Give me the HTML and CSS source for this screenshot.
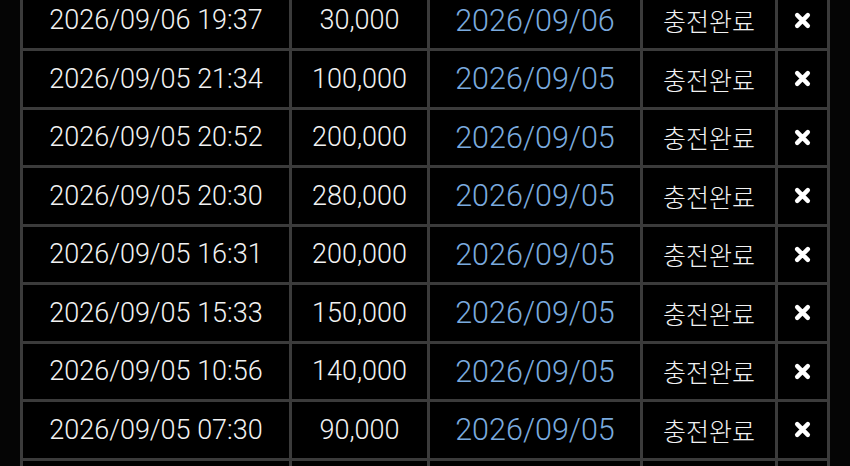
FILE: index.html
```html
<!DOCTYPE html>
<html lang="ko">

<head>
    <meta charset="UTF-8">
    <meta name="viewport" content="width=device-width, initial-scale=1.0">
    <title>충전내역</title>
    <link rel="stylesheet" href="styles.css">
</head>

<body>
    <div class="history">
        <table class="charge-table">
            <tbody>
                <tr>
                    <td class="time">2026/09/06 19:37</td>
                    <td class="amount">30,000</td>
                    <td class="date">2026/09/06</td>
                    <td class="status">충전완료</td>
                    <td class="del"><svg viewBox="0 0 16 16"><path d="M3 3L13 13M13 3L3 13" /></svg></td>
                </tr>
                <tr>
                    <td class="time">2026/09/05 21:34</td>
                    <td class="amount">100,000</td>
                    <td class="date">2026/09/05</td>
                    <td class="status">충전완료</td>
                    <td class="del"><svg viewBox="0 0 16 16"><path d="M3 3L13 13M13 3L3 13" /></svg></td>
                </tr>
                <tr>
                    <td class="time">2026/09/05 20:52</td>
                    <td class="amount">200,000</td>
                    <td class="date">2026/09/05</td>
                    <td class="status">충전완료</td>
                    <td class="del"><svg viewBox="0 0 16 16"><path d="M3 3L13 13M13 3L3 13" /></svg></td>
                </tr>
                <tr>
                    <td class="time">2026/09/05 20:30</td>
                    <td class="amount">280,000</td>
                    <td class="date">2026/09/05</td>
                    <td class="status">충전완료</td>
                    <td class="del"><svg viewBox="0 0 16 16"><path d="M3 3L13 13M13 3L3 13" /></svg></td>
                </tr>
                <tr>
                    <td class="time">2026/09/05 16:31</td>
                    <td class="amount">200,000</td>
                    <td class="date">2026/09/05</td>
                    <td class="status">충전완료</td>
                    <td class="del"><svg viewBox="0 0 16 16"><path d="M3 3L13 13M13 3L3 13" /></svg></td>
                </tr>
                <tr>
                    <td class="time">2026/09/05 15:33</td>
                    <td class="amount">150,000</td>
                    <td class="date">2026/09/05</td>
                    <td class="status">충전완료</td>
                    <td class="del"><svg viewBox="0 0 16 16"><path d="M3 3L13 13M13 3L3 13" /></svg></td>
                </tr>
                <tr>
                    <td class="time">2026/09/05 10:56</td>
                    <td class="amount">140,000</td>
                    <td class="date">2026/09/05</td>
                    <td class="status">충전완료</td>
                    <td class="del"><svg viewBox="0 0 16 16"><path d="M3 3L13 13M13 3L3 13" /></svg></td>
                </tr>
                <tr>
                    <td class="time">2026/09/05 07:30</td>
                    <td class="amount">90,000</td>
                    <td class="date">2026/09/05</td>
                    <td class="status">충전완료</td>
                    <td class="del"><svg viewBox="0 0 16 16"><path d="M3 3L13 13M13 3L3 13" /></svg></td>
                </tr>
                <!-- next row only peeks in at the bottom edge -->
                <tr class="peek">
                    <td></td>
                    <td></td>
                    <td></td>
                    <td></td>
                    <td></td>
                </tr>
            </tbody>
        </table>
    </div>
</body>

</html>
```

FILE: styles.css
```css
/* charge history list, dark theme */
body {
    margin: 0;
    padding: 0;
    background-color: #050505;
    font-family: Roboto, "Noto Sans CJK KR", sans-serif;
    overflow: hidden;
}

.history {
    padding-left: 20px;
    margin-top: -10.5px;
}

.charge-table {
    border-collapse: separate;
    border-spacing: 0;
    border-top: 3px solid #3b3b3b;
    border-left: 3px solid #3b3b3b;
    background-color: #000;
    table-layout: fixed;
}

.charge-table td {
    box-sizing: border-box;
    height: 58.5px;
    padding: 0;
    border-right: 3px solid #3b3b3b;
    border-bottom: 3px solid #3b3b3b;
    text-align: center;
    vertical-align: middle;
    color: #f2f2f2;
    font-size: 27px;
    font-weight: 300;
    white-space: nowrap;
}

.charge-table .time {
    width: 269px;
}

.charge-table .amount {
    width: 138px;
}

.charge-table .date {
    width: 213px;
    color: #7aaade;
    font-size: 30.5px;
}

.charge-table .status {
    width: 135px;
    font-family: "Noto Sans CJK KR", sans-serif;
    font-size: 25px;
}

.charge-table .del {
    width: 52px;
}

.del svg {
    display: block;
    width: 17px;
    height: 17px;
    margin: 0 auto;
    stroke: #fff;
    stroke-width: 4.2;
    stroke-linecap: round;
    fill: none;
}
```
